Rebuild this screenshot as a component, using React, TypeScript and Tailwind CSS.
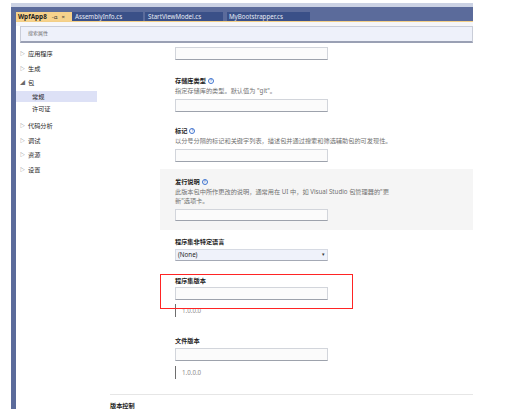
import React from "react";

const font = "font-['Noto_Sans','Noto_Sans_CJK_SC',sans-serif]";

function Info() {
  return (
    <span className="ml-[2px] inline-flex h-[6px] w-[6px] items-center justify-center rounded-full border border-[#3f74cf] text-[4px] leading-none text-[#3f74cf]">
      ?
    </span>
  );
}

function Input({ h = "h-[13px]" }: { h?: string }) {
  return <div className={`w-[153px] ${h} border border-[#d2d5db] border-b-[#9da2ac] bg-[#fbfbfb]`} />;
}

function Label({ children, info }: { children: React.ReactNode; info?: boolean }) {
  return (
    <div className="flex h-[10px] items-center text-[6.2px] font-semibold leading-[10px] text-[#1e1e1e]">
      {children}
      {info && <Info />}
    </div>
  );
}

function Desc({ children }: { children: React.ReactNode }) {
  return <div className="h-[10px] whitespace-nowrap text-[6.2px] leading-[10px] text-[#717171]">{children}</div>;
}

function Version() {
  return (
    <div className="flex h-[13px] items-center">
      <div className="h-full w-[1px] bg-[#6e6e6e]" />
      <span className="ml-[6px] text-[6.2px] text-[#8d8d8d]">1.0.0.0</span>
    </div>
  );
}

function NavItem({
  label,
  h,
  arrow,
  child,
  selected,
  extra = "",
}: {
  label: string;
  h: string;
  arrow?: "closed" | "open";
  child?: boolean;
  selected?: boolean;
  extra?: string;
}) {
  return (
    <div className={`flex ${h} ${extra} items-center ${selected ? "w-[81px] bg-[#dde1f6]" : ""}`}>
      <span className="flex w-[12px] justify-end pr-[3px] text-[5px] text-[#6a6a6a]">
        {arrow === "closed" ? "▷" : arrow === "open" ? "◢" : ""}
      </span>
      <span className={`text-[6.2px] text-[#1e1e1e] ${child ? "pl-[4px]" : ""}`}>{label}</span>
    </div>
  );
}

export default function App() {
  return (
    <div className={`relative h-[409px] w-[525px] overflow-hidden bg-white ${font}`}>
      <div className="ml-[11px] w-[462px] pt-[3px]">
        <div className="h-[4px] bg-[#cbd2e4]" />
        <div className="flex">
          <div className="h-[402px] w-[5px] shrink-0 bg-[#5b6b9b]" />
          <div className="flex-1">
            {/* tab bar */}
            <div className="flex h-[14px] items-end bg-[#5b6b9b]">
              <div className="flex h-[9px] w-[56px] items-center bg-[#f6d28c] pl-[2px]">
                <span className="text-[6.4px] font-bold text-[#1e1e1e]">WpfApp8</span>
                <span className="ml-[5px] text-[6px] leading-none text-[#333]">-ɑ</span>
                <span className="ml-[4px] text-[6px] leading-none text-[#333]">×</span>
              </div>
              <div className="flex h-[9px] w-[71px] items-center bg-[#3a5088] pl-[3px] text-[6.2px] text-[#e6eaf4]">
                AssemblyInfo.cs
              </div>
              <div className="ml-[2px] flex h-[9px] w-[78px] items-center bg-[#3a5088] pl-[3px] text-[6.2px] text-[#e6eaf4]">
                StartViewModel.cs
              </div>
              <div className="ml-[4px] flex h-[9px] w-[83px] items-center bg-[#3a5088] pl-[2px] text-[6.2px] text-[#e6eaf4]">
                MyBootstrapper.cs
              </div>
            </div>
            <div className="h-[1px] bg-[#f3cf86]" />
            <div className="h-[4px] bg-[#f5f6f9]" />
            {/* search */}
            <div className="ml-[4px] flex h-[17px] items-center border border-[#c9cdd8] border-b-2 border-b-[#9aa0b4] bg-[#eef1fa] pl-[7px]">
              <span className="text-[5px] text-[#6f6f6f]">搜索属性</span>
            </div>
            {/* body */}
            <div className="flex">
              {/* nav */}
              <div className="w-[94px] shrink-0 pt-[4px]">
                <NavItem label="应用程序" h="h-[14px]" arrow="closed" />
                <NavItem label="生成" h="h-[15px]" arrow="closed" />
                <NavItem label="包" h="h-[14px]" arrow="open" />
                <NavItem label="常规" h="h-[11px]" child selected extra="mt-[1px]" />
                <NavItem label="许可证" h="h-[14px]" child />
                <NavItem label="代码分析" h="h-[14px]" arrow="closed" extra="mt-[3px]" />
                <NavItem label="调试" h="h-[15px]" arrow="closed" />
                <NavItem label="资源" h="h-[14px]" arrow="closed" />
                <NavItem label="设置" h="h-[15px]" arrow="closed" />
              </div>
              {/* content */}
              <div className="flex-1">
                <div className="pl-[65px] pt-[4px]">
                  <Input />
                  <div className="mt-[16px]">
                    <Label info>存储库类型</Label>
                    <Desc>指定存储库的类型。默认值为 "git"。</Desc>
                    <div className="mt-[3px]">
                      <Input />
                    </div>
                  </div>
                  <div className="mt-[14px]">
                    <Label info>标记</Label>
                    <Desc>以分号分隔的标记和关键字列表，描述包并通过搜索和筛选辅助包的可发现性。</Desc>
                    <div className="mt-[3px]">
                      <Input />
                    </div>
                  </div>
                </div>
                <div className="ml-[50px] mt-[7px] h-[61px] bg-[#f5f5f5] pl-[15px] pt-[8px]">
                  <Label info>发行说明</Label>
                  <div className="whitespace-nowrap text-[6.2px] leading-[9px] text-[#717171]">
                    <div>此版本包中所作更改的说明，通常用在 UI 中，如 Visual Studio 包管理器的"更</div>
                    <div>新"选项卡。</div>
                  </div>
                  <div className="mt-[4px]">
                    <Input h="h-[12px]" />
                  </div>
                </div>
                <div className="pl-[65px]">
                  <div className="mt-[7px]">
                    <Label>程序集非特定语言</Label>
                    <div className="mt-[2px] flex h-[12px] w-[153px] items-center justify-between border border-[#d6dae3] border-b-[#a4a9b5] bg-[#eff2fa] pl-[2px] pr-[2px]">
                      <span className="text-[6.2px] text-[#1e1e1e]">(None)</span>
                      <span className="text-[5px] text-[#333]">▾</span>
                    </div>
                  </div>
                </div>
                <div className="relative mt-[15px] pl-[65px]">
                  <div className="pointer-events-none absolute left-[50px] top-[-2px] h-[35px] w-[193px] border-[1.5px] border-[#ff2424]" />
                  <Label>程序集版本</Label>
                  <div className="mt-[1px]">
                    <Input />
                  </div>
                  <div className="mt-[4px]">
                    <Version />
                  </div>
                </div>
                <div className="mt-[19px] pl-[65px]">
                  <Label>文件版本</Label>
                  <div className="mt-[2px]">
                    <Input />
                  </div>
                  <div className="mt-[5px]">
                    <Version />
                  </div>
                </div>
                <div className="mt-[15px] h-[1px] bg-[#e6e6e6]" />
                <div className="mt-[7px] text-[6.2px] font-semibold leading-[8px] text-[#1e1e1e]">版本控制</div>
              </div>
            </div>
          </div>
        </div>
      </div>
    </div>
  );
}
